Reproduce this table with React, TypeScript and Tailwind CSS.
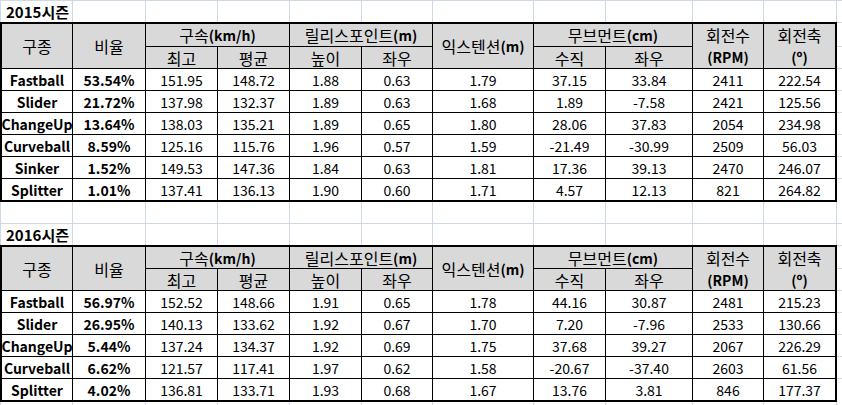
import React from "react";

const W = [
  "w-[73px] border-l",
  "w-[73px]",
  "w-[72px]",
  "w-[72px]",
  "w-[72px]",
  "w-[71px]",
  "w-[101px]",
  "w-[72px]",
  "w-[87px]",
  "w-[71px]",
  "w-[73px]",
];

type Row = (string | number)[];

const data2015: Row[] = [
  ["Fastball", "53.54%", "151.95", "148.72", "1.88", "0.63", "1.79", "37.15", "33.84", "2411", "222.54"],
  ["Slider", "21.72%", "137.98", "132.37", "1.89", "0.63", "1.68", "1.89", "-7.58", "2421", "125.56"],
  ["ChangeUp", "13.64%", "138.03", "135.21", "1.89", "0.65", "1.80", "28.06", "37.83", "2054", "234.98"],
  ["Curveball", "8.59%", "125.16", "115.76", "1.96", "0.57", "1.59", "-21.49", "-30.99", "2509", "56.03"],
  ["Sinker", "1.52%", "149.53", "147.36", "1.84", "0.63", "1.81", "17.36", "39.13", "2470", "246.07"],
  ["Splitter", "1.01%", "137.41", "136.13", "1.90", "0.60", "1.71", "4.57", "12.13", "821", "264.82"],
];

const data2016: Row[] = [
  ["Fastball", "56.97%", "152.52", "148.66", "1.91", "0.65", "1.78", "44.16", "30.87", "2481", "215.23"],
  ["Slider", "26.95%", "140.13", "133.62", "1.92", "0.67", "1.70", "7.20", "-7.96", "2533", "130.66"],
  ["ChangeUp", "5.44%", "137.24", "134.37", "1.92", "0.69", "1.75", "37.68", "39.27", "2067", "226.29"],
  ["Curveball", "6.62%", "121.57", "117.41", "1.97", "0.62", "1.58", "-20.67", "-37.40", "2603", "61.56"],
  ["Splitter", "4.02%", "136.81", "133.71", "1.93", "0.68", "1.67", "13.76", "3.81", "846", "177.37"],
];

function SheetRow({
  h,
  title,
  top,
  bottom,
}: {
  h: string;
  title?: string;
  top?: boolean;
  bottom?: boolean;
}) {
  return (
    <div className={`flex shrink-0 ${h}`}>
      {W.map((w, i) => (
        <div
          key={i}
          className={`${w} shrink-0 h-full border-r border-[#d0d7e5] ${top ? "border-t" : ""} ${bottom ? "border-b" : ""} flex items-center`}
        >
          {i === 0 && title ? (
            <span className="pl-[5px] whitespace-nowrap font-bold text-[15px] leading-none text-black">
              {title}
            </span>
          ) : null}
        </div>
      ))}
      <div
        className={`w-[5px] shrink-0 h-full border-[#d0d7e5] ${top ? "border-t" : ""} ${bottom ? "border-b" : ""}`}
      />
    </div>
  );
}

function H({ ko, en, span }: { ko?: string; en?: string; span: string }) {
  return (
    <div className={`${span} bg-[#d9d9d9] flex items-center justify-center whitespace-nowrap text-black`}>
      {ko ? <span className="text-[16px] leading-none">{ko}</span> : null}
      {en ? <span className="text-[14px] leading-none font-bold">{en}</span> : null}
    </div>
  );
}

function H2({ top, bottom }: { top: string; bottom: string }) {
  return (
    <div className="row-span-2 bg-[#d9d9d9] flex flex-col items-center justify-center text-black">
      <span className="text-[16px] leading-[22px]">{top}</span>
      <span className="text-[14px] leading-[22px] font-bold">{bottom}</span>
    </div>
  );
}

function Table({ rows, first }: { rows: Row[]; first: boolean }) {
  const gridRows =
    rows.length === 6
      ? "grid-rows-[22px_21px_21px_21px_21px_21px_21px_21px]"
      : "grid-rows-[21px_21px_21px_21px_21px_21px_21px]";
  return (
    <div className="flex shrink-0">
      <div
        className={`grid ${gridRows} grid-cols-[70px_72px_71px_71px_71px_70px_100px_71px_86px_70px_71px] gap-px bg-black border-2 border-black w-[837px] shrink-0`}
      >
        <H ko="구종" span="row-span-2" />
        <H ko="비율" span="row-span-2" />
        <H ko="구속" en="(km/h)" span="col-span-2" />
        <H ko="릴리스포인트" en="(m)" span="col-span-2" />
        <H ko="익스텐션" en="(m)" span="row-span-2" />
        <H ko="무브먼트" en="(cm)" span="col-span-2" />
        <H2 top="회전수" bottom="(RPM)" />
        <H2 top="회전축" bottom="(º)" />
        <H ko="최고" span="" />
        <H ko="평균" span="" />
        <H ko="높이" span="" />
        <H ko="좌우" span="" />
        <H ko="수직" span="" />
        <H ko="좌우" span="" />
        {rows.map((r, ri) =>
          r.map((c, ci) => (
            <div
              key={`${ri}-${ci}`}
              className={`bg-white flex items-center justify-center whitespace-nowrap text-[14px] leading-none text-black ${ci < 2 ? "font-bold" : ""}`}
            >
              {c}
            </div>
          ))
        )}
      </div>
      <div className="w-[5px] shrink-0 flex flex-col">
        <div className={`${first ? "h-[24px]" : "h-[23px]"} border-t border-[#d0d7e5] shrink-0`} />
        <div className="h-[22px] border-t border-[#d0d7e5] shrink-0" />
        {rows.map((_, i) => (
          <div key={i} className="h-[22px] border-t border-[#d0d7e5] shrink-0" />
        ))}
        <div className="h-[2px] shrink-0" />
      </div>
    </div>
  );
}

export default function App() {
  return (
    <div className="w-[842px] h-[405px] bg-white overflow-hidden flex flex-col font-['Noto_Sans_CJK_KR','Noto_Sans',sans-serif] text-black">
      <SheetRow h="h-[22px]" title="2015시즌" top />
      <Table rows={data2015} first />
      <SheetRow h="h-[22px]" bottom />
      <SheetRow h="h-[21px]" title="2016시즌" />
      <Table rows={data2016} first={false} />
      <div className="flex-1 flex">
        {W.map((w, i) => (
          <div key={i} className={`${w} shrink-0 h-full border-r border-[#d0d7e5]`} />
        ))}
      </div>
    </div>
  );
}
